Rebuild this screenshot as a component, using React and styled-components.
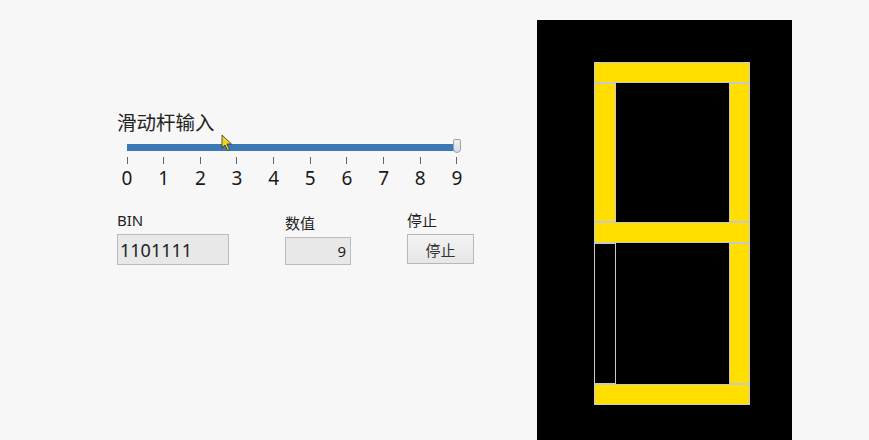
import React from 'react';
import styled, { createGlobalStyle } from 'styled-components';

const GlobalStyle = createGlobalStyle`
  html, body {
    margin: 0;
    padding: 0;
    background: #f7f7f7;
    overflow: hidden;
  }
  body {
    font-family: "Noto Sans", "Noto Sans CJK SC", sans-serif;
    color: #222;
  }
`;

// segment state for digit 9 (a b c d e f g)
const DIGIT = { a: 1, b: 1, c: 1, d: 1, e: 0, f: 1, g: 1 };

const App = () => {
  const ticks = [0, 1, 2, 3, 4, 5, 6, 7, 8, 9];

  return (
    <>
      <GlobalStyle />
      <Page>
        <LeftPane>
          <SliderBlock>
            <SliderLabel>滑动杆输入</SliderLabel>
            <Track>
              <Thumb />
            </Track>
            <TickRow>
              {ticks.map((t) => (
                <Tick key={t}>
                  <TickMark />
                  <TickLabel>{t}</TickLabel>
                </Tick>
              ))}
            </TickRow>
          </SliderBlock>

          <FieldRow>
            <Field>
              <FieldLabel>BIN</FieldLabel>
              <TextBox w={112} h={31}>1101111</TextBox>
            </Field>
            <Field>
              <FieldLabel>数值</FieldLabel>
              <TextBox w={66} h={28} right>9</TextBox>
            </Field>
            <Field>
              <FieldLabel>停止</FieldLabel>
              <StopButton>停止</StopButton>
            </Field>
          </FieldRow>

          <Cursor viewBox="0 0 12 18" width="12" height="18">
            <path d="M1 1 L1 14 L4 11 L6.5 16.5 L8.5 15.5 L6 10 L10.5 10 Z" fill="#f5d21c" stroke="#333" strokeWidth="0.8" strokeLinejoin="round" />
          </Cursor>
        </LeftPane>

        <Display>
          <Digit>
            <HSeg on={DIGIT.a} row={1} />
            <VSeg on={DIGIT.f} row={2} col={1} />
            <VSeg on={DIGIT.b} row={2} col={3} />
            <HSeg on={DIGIT.g} row={3} />
            <VSeg on={DIGIT.e} row={4} col={1} />
            <VSeg on={DIGIT.c} row={4} col={3} />
            <HSeg on={DIGIT.d} row={5} />
          </Digit>
        </Display>
      </Page>
    </>
  );
};

const Page = styled.div`
  width: 869px;
  height: 440px;
  display: flex;
  align-items: flex-start;
`;

const LeftPane = styled.div`
  position: relative;
  width: 537px;
  height: 440px;
  padding: 110px 0 0 117px;
  box-sizing: border-box;
  display: flex;
  flex-direction: column;
`;

const SliderBlock = styled.div`
  display: flex;
  flex-direction: column;
`;

const SliderLabel = styled.div`
  font-family: "Noto Sans CJK SC", sans-serif;
  font-size: 19.5px;
  line-height: 24px;
  color: #222;
  height: 24px;
`;

const Track = styled.div`
  position: relative;
  margin: 10px 0 0 10px;
  width: 330px;
  height: 7px;
  background: #3b7ab6;
`;

const Thumb = styled.div`
  position: absolute;
  right: -4px;
  top: -5px;
  width: 8px;
  height: 14px;
  box-sizing: border-box;
  background: linear-gradient(#eef1f5, #d4dbe4);
  border: 1px solid #9aa3ad;
  border-radius: 2px 2px 4px 4px;
`;

const TickRow = styled.div`
  width: 350px;
  margin-top: 6px;
  display: flex;
  justify-content: space-between;
`;

const Tick = styled.div`
  width: 20px;
  display: flex;
  flex-direction: column;
  align-items: center;
`;

const TickMark = styled.div`
  width: 1px;
  height: 7px;
  background: #666;
`;

const TickLabel = styled.div`
  margin-top: 2px;
  font-size: 19px;
  line-height: 24px;
  color: #1a1a1a;
`;

const FieldRow = styled.div`
  margin-top: 20px;
  display: flex;
  align-items: flex-end;
  gap: 56px;
`;

const Field = styled.div`
  display: flex;
  flex-direction: column;
  gap: 4px;
`;

const FieldLabel = styled.div`
  font-family: "Noto Sans", "Noto Sans CJK SC", sans-serif;
  font-size: 15px;
  line-height: 20px;
  color: #222;
`;

const TextBox = styled.div`
  width: ${({ w }) => w}px;
  height: ${({ h }) => h}px;
  box-sizing: border-box;
  background: #e8e8e8;
  border: 1px solid #bcbcbc;
  display: flex;
  align-items: center;
  justify-content: ${({ right }) => (right ? 'flex-end' : 'flex-start')};
  padding: 0 ${({ right }) => (right ? '4px' : '2px')};
  font-size: ${({ right }) => (right ? '15px' : '18px')};
  color: #222;
`;

const StopButton = styled.button`
  width: 67px;
  height: 30px;
  margin: 0 0 1px 0;
  padding: 0;
  box-sizing: border-box;
  background: linear-gradient(#f3f3f3, #e6e6e6);
  border: 1px solid #b8b8b8;
  border-radius: 0;
  font-family: "Noto Sans CJK SC", sans-serif;
  font-size: 15px;
  color: #333;
`;

const Cursor = styled.svg`
  position: absolute;
  left: 221px;
  top: 134px;
`;

const Display = styled.div`
  margin-top: 20px;
  width: 255px;
  height: 420px;
  background: #000;
  padding: 42px 0 0 57px;
  box-sizing: border-box;
`;

const Digit = styled.div`
  display: grid;
  grid-template-columns: 22px 113px 21px;
  grid-template-rows: 21px 139px 21px 141px 21px;
`;

const Seg = styled.div`
  box-sizing: border-box;
  border: 1px solid #c9c9c9;
  background: ${({ on }) => (on ? '#ffde00' : '#000')};
`;

const HSeg = styled(Seg)`
  grid-column: 1 / 4;
  grid-row: ${({ row }) => row};
`;

const VSeg = styled(Seg)`
  grid-column: ${({ col }) => col};
  grid-row: ${({ row }) => row};
`;

export default App;
